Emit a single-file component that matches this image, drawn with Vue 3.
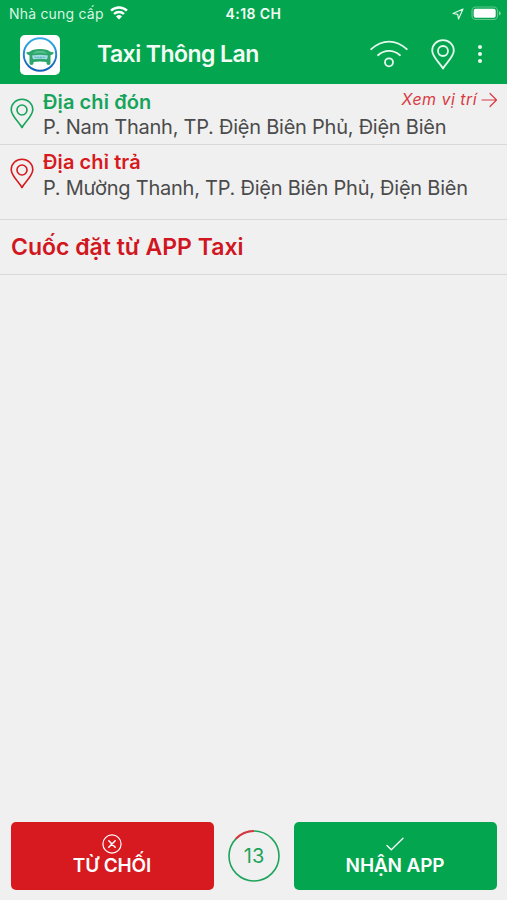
<template>
  <div class="screen">
    <header class="header">
      <div class="status-bar">
        <div class="carrier">
          <span class="carrier-name">Nhà cung cấp</span>
          <svg class="status-wifi" width="18" height="14" viewBox="0 0 18 14" fill="none" stroke="#fff" stroke-width="2.4">
            <path d="M1 4.7a11.6 11.6 0 0 1 16 0" />
            <path d="M4 8a7.3 7.3 0 0 1 10 0" />
            <path d="M9 13.4 6 10.5a4.4 4.4 0 0 1 6 0z" fill="#fff" stroke="none" />
          </svg>
        </div>
        <span class="clock">4:18 CH</span>
        <div class="status-right">
          <svg width="12" height="12" viewBox="0 0 12 12" fill="none" stroke="#e2f7ea" stroke-width="1.2" stroke-linejoin="round">
            <path d="M11 1 1 5.5l4.7.8.8 4.7z" />
          </svg>
          <svg width="31" height="15" viewBox="0 0 31 15">
            <rect x="1" y="1" width="25.5" height="12.5" rx="3.8" fill="none" stroke="#63c68e" stroke-width="1.1" />
            <rect x="2.7" y="2.8" width="22" height="9" rx="2" fill="#fff" />
            <path d="M28 5v4.600q1.700-.7 1.700-2.300T28 5z" fill="#83d3a5" />
          </svg>
        </div>
      </div>
      <div class="nav-bar">
        <svg class="logo" width="40" height="40" viewBox="0 0 40 40">
          <defs>
            <linearGradient id="ring" x1="0" y1="0" x2="0" y2="1">
              <stop offset="0" stop-color="#35ade6" />
              <stop offset="1" stop-color="#1560b4" />
            </linearGradient>
          </defs>
          <rect width="40" height="40" rx="5" fill="#fff" />
          <circle cx="20" cy="19.5" r="16.2" fill="none" stroke="url(#ring)" stroke-width="1.9" />
          <path d="M6 17.500q4-.5 6.500-2.500 7.500-1.800 15 0 2.500 2 6.500 2.500l-1.500 2-2 .8v8q0 1.700-2 1.700t-2-1.700v-1.300q-6.500-1.200-13 0v1.300q0 1.700-2 1.700t-2-1.700v-8l-2-.8z" fill="#2ca66b" />
          <path d="m12.500 18.700 2.500-2.300q5-1.200 10 0l2.500 2.300q-7.500-1.200-15 0z" fill="#58bf8b" />
          <path d="M12 20.500q8-1.500 16 0l-1 3.800q-7-1-14 0z" fill="#a5dcdf" />
          <path d="M14.500 22.300h11" stroke="#63b5ce" stroke-width="1.200" stroke-dasharray="2 .7" />
        </svg>
        <h1 class="title">Taxi Thông Lan</h1>
        <div class="nav-icons">
          <svg width="38" height="30" viewBox="0 0 38 30" fill="none" stroke="#e6faee" stroke-width="1.8" stroke-linecap="round">
            <path d="M1.2 10.2Q9.5 2.6 19 2.6t17.800 7.600" />
            <path d="M8 16.200q5-4.400 11-4.400t11 4.400" />
            <circle cx="19" cy="23.300" r="4" />
          </svg>
          <svg class="nav-pin" width="24" height="31" viewBox="0 0 24 31" fill="none" stroke="#e6faee" stroke-width="1.8" stroke-linejoin="round">
            <path :d="pinPath" />
            <circle cx="12" cy="12" r="5" />
          </svg>
          <svg class="dots" width="6" height="20" viewBox="0 0 6 20" fill="#e6faee">
            <circle cx="3" cy="3" r="2" />
            <circle cx="3" cy="10" r="2" />
            <circle cx="3" cy="17" r="2" />
          </svg>
        </div>
      </div>
    </header>

    <section v-for="place in places" :key="place.label" class="place" :class="place.type">
      <svg class="place-pin" width="24" height="31" viewBox="0 0 24 31" fill="none" stroke="currentColor" stroke-width="1.6" stroke-linejoin="round">
        <path :d="pinPath" />
        <circle cx="12" cy="12" r="5" />
      </svg>
      <div class="place-body">
        <div class="place-top">
          <h2 class="place-label">{{ place.label }}</h2>
          <a v-if="place.type === 'pickup'" class="view-link">
            <span class="view-text">Xem vị trí</span>
            <svg width="17" height="16" viewBox="0 0 17 16" fill="none" stroke="currentColor" stroke-width="1.2" stroke-linecap="round" stroke-linejoin="round">
              <path d="M1 8h14.500M9 1.500 15.500 8 9 14.500" />
            </svg>
          </a>
        </div>
        <p class="address">{{ place.address }}</p>
      </div>
    </section>

    <section class="source"><span>Cuốc đặt từ APP Taxi</span></section>

    <footer class="actions">
      <button class="btn reject">
        <svg width="20" height="20" viewBox="0 0 20 20" fill="none" stroke="#fff" stroke-width="1.2" stroke-linecap="round">
          <circle cx="10" cy="10" r="9.1" />
          <path d="m6.800 6.800 6.400 6.400m0-6.400-6.400 6.400" stroke-width="1.5" />
        </svg>
        <span>TỪ CHỐI</span>
      </button>
      <div class="timer">
        <svg class="timer-ring" width="52" height="52" viewBox="0 0 52 52" fill="none" stroke-width="1.6">
          <circle cx="26" cy="26" r="25" stroke="#1fa35c" />
          <path d="M7.800 8.900A25 25 0 0 1 26 1" stroke="#dc3540" stroke-width="1.9" />
        </svg>
        <span class="seconds">{{ seconds }}</span>
      </div>
      <button class="btn accept">
        <svg width="20" height="20" viewBox="0 0 20 20" fill="none" stroke="#fff" stroke-width="1.3" stroke-linecap="round" stroke-linejoin="round">
          <path d="m2 11.500 4.300 4.300L18 4.200" />
        </svg>
        <span>NHẬN APP</span>
      </button>
    </footer>
  </div>
</template>

<script setup>
import { ref } from 'vue'

const pinPath = 'M12 29.500C9 24 1.200 18 1.200 11.500a10.800 10.300 0 0 1 21.600 0C22.800 18 15 24 12 29.500z'

const places = [
  { type: 'pickup', label: 'Địa chỉ đón', address: 'P. Nam Thanh, TP. Điện Biên Phủ, Điện Biên' },
  { type: 'dropoff', label: 'Địa chỉ trả', address: 'P. Mường Thanh, TP. Điện Biên Phủ, Điện Biên' }
]

const seconds = ref(13)
</script>

<style>
body {
  margin: 0;
  background: #f0f0f0;
}
</style>

<style scoped>
.screen {
  display: flex;
  flex-direction: column;
  height: 900px;
  background: #f0f0f0;
  font-family: Inter, 'Liberation Sans', sans-serif;
  white-space: nowrap;
}
svg {
  display: block;
  flex: none;
}
h1, h2, p {
  margin: 0;
}
.header {
  height: 84px;
  background: #03a64f;
  color: #f2fcf5;
}
.status-bar {
  display: grid;
  grid-template-columns: 1fr auto 1fr;
  align-items: center;
  height: 27px;
}
.carrier {
  display: flex;
  align-items: center;
  gap: 6px;
  padding-left: 9px;
  font-size: 14px;
  letter-spacing: 0.2px;
  line-height: 17px;
  color: #d9f5e3;
}
.status-wifi {
  margin-top: -1px;
}
.clock {
  font-size: 14px;
  font-weight: 600;
  letter-spacing: 0.4px;
}
.status-right {
  display: flex;
  align-items: center;
  justify-content: flex-end;
  gap: 7px;
  padding-right: 5px;
}
.nav-bar {
  display: flex;
  align-items: center;
  height: 54px;
  padding: 0 24.5px 0 20px;
}
.logo {
  margin-top: 1px;
}
.title {
  margin: -1px 0 0 37px;
  font-size: 23px;
  font-weight: 600;
  letter-spacing: -0.55px;
  line-height: 28px;
}
.nav-icons {
  display: flex;
  align-items: center;
  margin-left: auto;
}
.nav-pin {
  margin-left: 23px;
}
.dots {
  margin-left: 22px;
}
.place {
  display: flex;
  box-sizing: border-box;
  border-bottom: 1px solid #d9d9d9;
}
.pickup {
  height: 61px;
  padding-top: 1px;
  color: #16a45b;
}
.dropoff {
  height: 75px;
  color: #d71920;
}
.place-pin {
  margin: 13px 9.5px 0 9.5px;
}
.place-body {
  flex: 1;
}
.place-top {
  display: flex;
  justify-content: space-between;
  height: 30px;
  padding-right: 9px;
}
.place-label {
  margin-top: 5px;
  font-size: 20px;
  font-weight: 600;
  letter-spacing: 0.1px;
  line-height: 25px;
}
.view-link {
  display: flex;
  align-items: center;
  gap: 4px;
  color: #d83b43;
  font-size: 16px;
  font-style: italic;
  letter-spacing: 0.45px;
}
.view-text {
  margin-top: -2px;
}
.address {
  color: #4b4b4b;
  font-size: 20px;
  letter-spacing: -0.24px;
  line-height: 25px;
}
.dropoff .address {
  padding-top: 0.5px;
}
.source {
  display: flex;
  align-items: center;
  box-sizing: border-box;
  height: 55px;
  padding-left: 11px;
  border-bottom: 1px solid #d9d9d9;
  color: #d0161e;
  font-size: 23px;
  font-weight: 600;
}
.actions {
  display: flex;
  align-items: center;
  justify-content: space-between;
  margin-top: auto;
  padding: 0 10px 10px 11px;
}
.btn {
  display: flex;
  flex-direction: column;
  align-items: center;
  box-sizing: border-box;
  width: 203px;
  height: 68px;
  padding: 12px 1px 0 0;
  border: none;
  border-radius: 5px;
  color: #fff;
  font-family: inherit;
  font-size: 19px;
  font-weight: 600;
  letter-spacing: -0.15px;
  line-height: 23px;
}
.reject {
  background: #d71920;
}
.accept {
  background: #03a64f;
}
.timer {
  display: grid;
  place-items: center;
}
.timer > * {
  grid-area: 1 / 1;
}
.seconds {
  color: #1fa35c;
  font-size: 20px;
}
</style>
